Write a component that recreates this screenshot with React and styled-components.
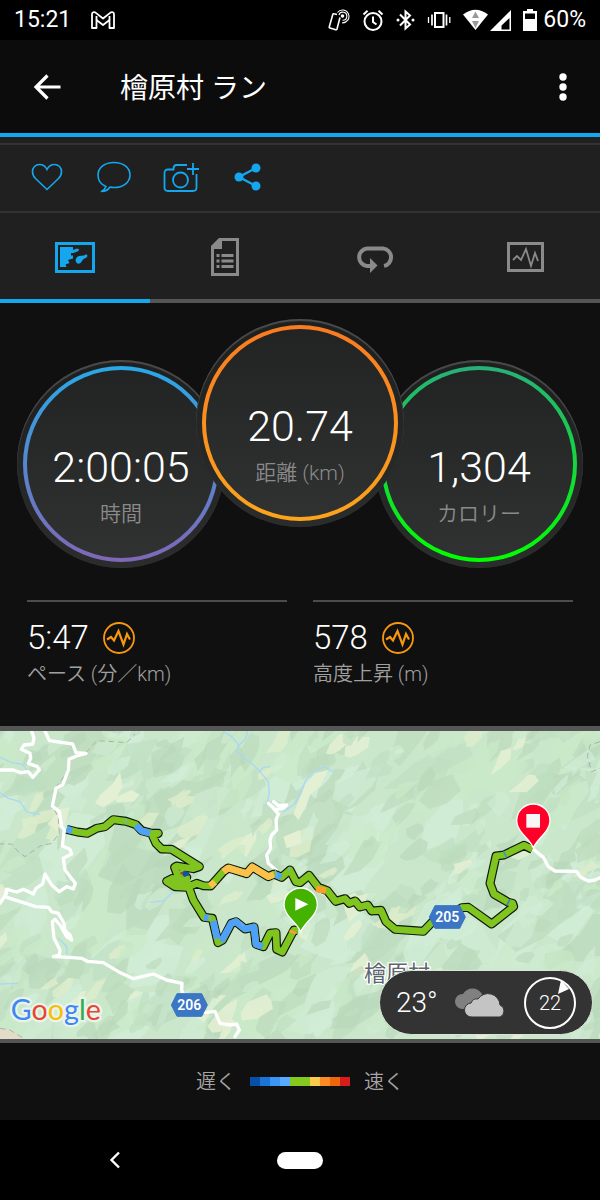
import React from 'react';
import styled, { createGlobalStyle } from 'styled-components';

const GlobalStyle = createGlobalStyle`
  * { box-sizing: border-box; }
  body { margin: 0; background: #101010; }
  svg { display: block; flex: none; }
`;

const fonts = 'Roboto, "Noto Sans CJK JP", sans-serif';

const Screen = styled.div`
  display: flex;
  flex-direction: column;
  min-height: 100vh;
  background: #101010;
  color: #fff;
  font-family: ${fonts};
`;

const StatusBar = styled.div`
  display: flex;
  align-items: center;
  justify-content: space-between;
  height: 40px;
  padding: 0 14px;
  background: #000;
  font-size: 23px;
  line-height: 28px;
  font-weight: 450;
`;

const StatusGroup = styled.div`
  display: flex;
  align-items: center;
  gap: ${(p) => p.$gap}px;
`;

const IconButton = styled.button`
  display: flex;
  align-items: center;
  justify-content: center;
  width: 48px;
  height: 48px;
  padding: 0;
  border: 0;
  background: transparent;
  color: inherit;
`;

const AppBar = styled.header`
  display: flex;
  align-items: center;
  height: 97px;
  padding: 0 13px 0 23px;
  background: #0c0c0c;
  border-bottom: 4px solid #14a7ee;
`;

const Title = styled.h1`
  flex: 1;
  margin: 0 0 0 49px;
  padding-top: 4px;
  font-size: 28px;
  line-height: 40px;
  font-weight: 400;
`;

const Actions = styled.div`
  display: flex;
  align-items: center;
  gap: 19px;
  height: 76px;
  padding: 6px 0 0 23px;
  color: #14a7ee;
  background: linear-gradient(#202020 6px, #333 6px, #333 8px, #202020 8px);
  border-bottom: 2px solid #333;
`;

const Tabs = styled.nav`
  display: grid;
  grid-template-columns: repeat(4, 1fr);
  background: #202020;
`;

const Tab = styled.button`
  display: flex;
  align-items: center;
  justify-content: center;
  height: 90px;
  padding: 2px 0 0;
  border: 0;
  border-bottom: 4px solid ${(p) => (p.$active ? '#14a7ee' : '#555')};
  background: transparent;
  color: ${(p) => (p.$active ? '#14a7ee' : '#8a8a8a')};
`;

const Dials = styled.section`
  display: flex;
  justify-content: center;
  align-items: flex-end;
  padding: 16px 0 32px;
`;

const Dial = styled.div`
  flex: none;
  width: 208px;
  height: 208px;
  padding: 6px;
  border-radius: 50%;
  background: linear-gradient(#1e1f1f, #2b2c2c);
  box-shadow: inset 0 2px 1px #4c4c4c, inset 0 0 2px #343434;
  position: relative;
  z-index: ${(p) => (p.$raised ? 1 : 0)};
  margin: ${(p) => (p.$raised ? '0 -29px 41px' : '0')};
`;

const Ring = styled.div`
  height: 100%;
  padding: 4px;
  border-radius: 50%;
  background: linear-gradient(${(p) => p.$from}, ${(p) => p.$to});
`;

const Face = styled.div`
  display: flex;
  flex-direction: column;
  align-items: center;
  height: 100%;
  padding-top: 71px;
  border-radius: 50%;
  background: linear-gradient(#222323, #303131);
`;

const DialValue = styled.div`
  font-size: 43px;
  line-height: 52px;
  font-weight: 300;
`;

const DialLabel = styled.div`
  margin-top: 7px;
  color: #8a8a8a;
  font-size: 21px;
  line-height: 28px;
  font-weight: 350;
`;

const Stats = styled.section`
  display: grid;
  grid-template-columns: 1fr 1fr;
  gap: 26px;
  padding: 0 27px 37px;
`;

const Stat = styled.div`
  border-top: 2px solid #4c4c4c;
  padding-top: 16px;
`;

const StatValue = styled.div`
  display: flex;
  align-items: center;
  gap: 14px;
  font-size: 33px;
  line-height: 40px;
  font-weight: 300;
`;

const StatLabel = styled.div`
  margin-top: 1px;
  color: #a0a0a0;
  font-size: 20px;
  line-height: 30px;
  font-weight: 350;
`;

const MapPanel = styled.section`
  position: relative;
  border-top: 5px solid #555;
  border-bottom: 4px solid #555;
`;

const MapCanvas = styled.svg`
  width: 100%;
  height: 308px;
  background: #cae7cc;
`;

const MapText = styled.text`
  font-family: ${(p) => p.$family || fonts};
  text-anchor: ${(p) => p.$anchor || 'start'};
  font-size: ${(p) => p.$size}px;
  font-weight: ${(p) => p.$weight || 400};
  paint-order: stroke;
  stroke-linejoin: round;
`;

const Weather = styled.div`
  position: absolute;
  right: 7px;
  bottom: 4px;
  display: flex;
  align-items: center;
  width: 214px;
  height: 65px;
  padding: 0 16px;
  border: 1px solid #d8e4d8;
  border-radius: 33px;
  background: #333;
`;

const Temperature = styled.div`
  width: 58px;
  font-size: 28px;
  line-height: 32px;
  font-weight: 300;
`;

const Wind = styled.div`
  display: grid;
  place-items: center;
  margin-left: 17px;
  font-size: 20px;
  line-height: 24px;
  font-weight: 300;
  > * { grid-area: 1 / 1; }
`;

const Legend = styled.div`
  flex: 1;
  display: flex;
  align-items: center;
  justify-content: center;
  gap: 14px;
  min-height: 77px;
  color: #a5a5a5;
  font-size: 20px;
  line-height: 30px;
  font-weight: 350;
`;

const Scale = styled.div`
  display: flex;
`;

const Swatch = styled.span`
  width: 10px;
  height: 9px;
  background: ${(p) => p.$color};
`;

const NavBar = styled.nav`
  display: grid;
  grid-template-columns: repeat(3, 1fr);
  align-items: center;
  height: 80px;
  padding: 0 23px;
  background: #000;
`;

const NavButton = styled(IconButton)`
  justify-self: center;
`;

const HomePill = styled.span`
  width: 46px;
  height: 17px;
  border-radius: 9px;
  background: #fff;
`;

const pulse = '6,18 10,14 14,18 19,7 24,24 28,11 31,19';

function PulseBadge() {
  return (
    <svg width="32" height="32" viewBox="0 0 32 32" fill="none" stroke="#f7980f">
      <circle cx="16" cy="16" r="15" strokeWidth="1.800" />
      <path d="M4 17.500l4-2.500 3 3.500 4.500-9.500 5 13.500 3.500-10.500 3 5.500" strokeWidth="2.200" />
    </svg>
  );
}

function StatusIcons() {
  return (
    <>
      <svg width="22" height="22" viewBox="0 0 22 22" fill="none" stroke="#fff">
        <path d="M12 8.500l-3 11.500q-.3 1-1.300.7L2 19q-1-.3-.7-1.300L4.800 5.500q.3-1 1.300-.7L9 5.500" strokeWidth="1.600" />
        <circle cx="14.500" cy="7" r="1.800" fill="#fff" stroke="none" />
        <path d="M11 6a4 4 0 1 1 3.500 5.200M9.500 3.500a6.400 6.400 0 1 1 4.500 10.300" strokeWidth="1.100" />
      </svg>
      <svg width="22" height="22" viewBox="0 0 22 22" fill="none" stroke="#fff" strokeWidth="2">
        <circle cx="11" cy="12.500" r="8.500" />
        <path d="M11 7.500V13l3.500 2.500M1.500 5.500l4-3.800M20.500 5.500l-4-3.800" />
      </svg>
      <svg width="19" height="22" viewBox="0 0 19 22" fill="none" stroke="#fff" strokeWidth="2">
        <path d="M4 5.500l10 10-4.500 4v-17l4.500 4-10 10" />
        <circle cx="2" cy="11" r="1.500" fill="#fff" stroke="none" />
        <circle cx="17" cy="11" r="1.500" fill="#fff" stroke="none" />
      </svg>
      <svg width="24" height="18" viewBox="0 0 24 18" fill="none" stroke="#fff" strokeWidth="2">
        <rect x="8" y="2" width="8.500" height="14" />
        <path d="M5 3.500v11M19.500 3.500v11" strokeWidth="1.700" />
        <path d="M1.500 6v6M22.800 6v6" strokeWidth="1.300" />
      </svg>
    </>
  );
}

function SignalIcons() {
  return (
    <>
      <svg width="25" height="22" viewBox="0 0 25 22">
        <path d="M0 5.500Q12.500-4 25 5.500L12.500 21z" fill="#fff" />
        <path d="M9 9l3.500-6.500L16 9zM9 12h7l-3.500 7z" fill="#999" />
      </svg>
      <svg width="21" height="21" viewBox="0 0 21 21">
        <path fill="#fff" fillRule="evenodd" d="M21 0v21H0zM19.500 8L11.500 15.500v4h8z" />
      </svg>
    </>
  );
}

/* Small deterministic generator, so the terrain looks the same on each load. */
function makeRandom(seed) {
  let s = seed;
  return () => {
    s = (s * 16807) % 2147483647;
    return s / 2147483647;
  };
}

const darkTones = ['#b8d7ba', '#bfdec1', '#bcdabc'];
const lightTones = ['#d3eed8', '#cfebd2', '#c9e9c8'];
const yellowTones = ['#e4f0d2', '#dcecca'];

const terrainLayers = [
  { count: 90, length: 120, width: 60, tones: [...darkTones, ...lightTones], opacity: 0.65 },
  { count: 190, length: 62, width: 32, tones: [...darkTones, ...darkTones, ...lightTones], opacity: 0.65 },
  { count: 60, length: 46, width: 20, tones: yellowTones, opacity: 0.85 },
  { count: 200, length: 42, width: 17, tones: [...darkTones, ...lightTones], opacity: 0.65 },
];

function buildTerrain() {
  const rnd = makeRandom(90211);
  const facets = [];
  terrainLayers.forEach((layer) => {
    for (let i = 0; i < layer.count; i += 1) {
      const x = rnd() * 1860 - 30;
      const y = rnd() * 980;
      const size = 0.6 + rnd() * 0.8;
      const a = -0.4 - rnd() * 0.8;
      const corners = 6 + Math.floor(rnd() * 4);
      const points = [];
      for (let k = 0; k < corners; k += 1) {
        const t = (k / corners) * Math.PI * 2;
        const r = (0.45 + rnd() * 0.9) * size;
        const px = Math.cos(t) * layer.length * r;
        const py = Math.sin(t) * layer.width * r;
        points.push(
          `${Math.round(x + px * Math.cos(a) - py * Math.sin(a))},${Math.round(y + px * Math.sin(a) + py * Math.cos(a))}`
        );
      }
      facets.push({
        points: points.join(' '),
        fill: layer.tones[Math.floor(rnd() * layer.tones.length)],
        opacity: layer.opacity,
      });
    }
  });
  return facets;
}

const terrain = buildTerrain();

const roads = [
  '95,33 102,55 98,72 72,75 64,88 90,100 92,115 85,130 112,140 118,150 98,172 85,155 62,158 40,150 0,150',
  '135,33 148,62 218,72 228,98 258,100 235,106 207,118 205,150 188,195 168,205 157,258 178,275 185,320 193,330 187,378 210,388 215,402 190,415 195,450 226,490 220,507 200,500 178,515 155,495 135,462 128,492 108,505 100,522 70,508 50,516 20,508 15,530 30,535 70,548 108,560 145,562 155,575 175,580 192,610 195,632 210,645 215,660 200,650 180,615 165,598 157,605 162,655 180,690 178,705 160,710 210,712 245,715 262,724 310,728 355,755 400,776 460,762 500,780 546,790 545,810 560,855',
  '615,878 645,874 660,910 690,915 710,912 718,930 705,950',
  '0,550 20,520',
  '805,250 818,262 835,282 828,300 830,330 815,345 810,360 812,385 800,405 805,430 830,452',
  '820,245 835,256 860,255 850,265 825,268',
  '1600,388 1630,412 1645,440 1665,453 1730,454 1742,472 1765,483 1785,480 1800,473',
];

const streams = [
  '670,36 690,46 718,75 738,55 742,33', '715,72 710,95 760,135 780,155 805,185 808,220 798,260',
  '780,152 790,142 810,140', '850,275 880,255 900,225 915,185 935,158 972,140 1002,156',
  '0,112 35,128 65,132 95,165', '0,218 25,235 60,245 80,275 120,284',
  '450,547 490,543 520,515', '175,655 200,680 202,705', '0,792 55,790',
];

const trails = [
  '258,98 290,62 340,65 380,68 405,42', '205,115 200,160 165,205 158,255 175,295 178,340 155,370 120,378 75,410 55,395 35,372 0,372',
  '0,925 30,930 70,955', '1800,65 1770,75 1762,110 1775,155 1800,145',
];

const meadows = [
  '300,225 340,190 360,155 368,200 345,240 310,262 285,250',
  '915,195 945,160 985,150 960,200 930,225 918,260 895,300 880,280',
  '850,350 900,330 905,370 860,385',
  '345,232 395,210 420,225 400,245 350,247',
];

const routes = [
  '200,328 232,336 262,340 290,325 315,320 340,299 378,304 408,314 425,332 455,340 475,340 458,348 468,370 485,387 515,388 598,440 580,446 530,438 524,442 540,485 518,475 500,484 525,500 562,502 590,490 610,497 632,498 670,455 685,444 740,461 757,441 805,470 822,462 845,472 870,450 888,485 900,488 927,466 955,502 982,512 1007,544 1035,536 1048,550 1065,543 1080,561 1103,555 1115,573 1143,571 1158,605 1185,628 1270,634 1298,605 1345,590 1385,563 1405,562 1475,612 1541,560 1538,550 1525,547 1482,522 1470,490 1488,408 1512,405 1572,376 1597,388',
  '562,490 580,540 612,592 637,595 654,668 668,660 694,610 708,605 735,627 762,621 768,673 790,680 810,640 828,638 830,688 847,696 882,630 894,632',
  '540,450 560,472 548,490 520,490',
];

const paceSegments = [
  ['#4fa0f8', '200,328 216,332'],
  ['#4fa0f8', '408,316 425,333 450,340'],
  ['#4fa0f8', '612,592 624,594'],
  ['#4fa0f8', '640,603 652,658'],
  ['#4fa0f8', '663,665 694,610 708,605 735,627 762,621 768,673 788,680'],
  ['#fbc14a', '630,498 645,486'],
  ['#fbc14a', '670,455 685,444 740,461 757,441 805,470 822,464'],
  ['#4fa0f8', '828,464 843,472'],
  ['#f7a02c', '948,506 978,512'],
  ['#f7a02c', '876,640 880,632'],
  ['#3f8fe0', '1513,404 1517,402'],
  ['#3f78c0', '1523,546 1527,548'],
];

const line = (points, i) => <polyline key={i} points={points} />;

function RouteShield({ x, y, label }) {
  return (
    <g>
      <path d={`M${x - 54} ${y}l17-34h74l17 34-17 34h-74z`} fill="#3b76c5" stroke="#3b76c5" strokeWidth="3" strokeLinejoin="round" />
      <MapText x={x} y={y + 15} $size={42} $weight={600} $anchor="middle" fill="#fff">{label}</MapText>
    </g>
  );
}

function Pin({ x, y, color, children }) {
  return (
    <g transform={`translate(${x} ${y})`}>
      <path d="M0 0C-10-28-50-48-50-82A50 50 0 0 1 50-82C50-48 10-28 0 0z" fill={color} stroke="#fff" strokeWidth="4" />
      {children}
    </g>
  );
}

function RouteMap() {
  return (
    <MapCanvas viewBox="0 33 1800 924" preserveAspectRatio="xMidYMid slice" role="img" aria-label="檜原村">
      {terrain.map((f, i) => (
        <polygon key={i} points={f.points} fill={f.fill} opacity={f.opacity} />
      ))}
      <g fill="#e4f0d4">
        {meadows.map((points) => (
          <polygon key={points} points={points} />
        ))}
      </g>
      <path d="M0 925l35 5 35 27H0z" fill="#e2dcc8" />
      <g fill="none" stroke="#a9d8f5" strokeWidth="4">{streams.map(line)}</g>
      <g fill="none" stroke="#a9b3a9" strokeWidth="3" strokeDasharray="17 11">{trails.map(line)}</g>
      <g fill="none" stroke="#fff" strokeWidth="10" strokeLinejoin="round" strokeLinecap="round">{roads.map(line)}</g>
      <g fill="none" stroke="#10180c" strokeWidth="27" strokeLinejoin="round">{routes.map(line)}</g>
      <g fill="none" stroke="#7fc41f" strokeWidth="20" strokeLinejoin="round">{routes.map(line)}</g>
      <g fill="none" strokeWidth="20" strokeLinejoin="round">
        {paceSegments.map(([color, points]) => (
          <polyline key={points} points={points} stroke={color} />
        ))}
      </g>
      <path d="M510 482l30-12 30 5 5 24-40 2z" fill="#7fc41f" />
      <path d="M543 458l10-6 13 4 2 10-16 5z" fill="#1350a0" />
      <path d="M541 457h8v6h-8z" fill="#c0392b" />
      <path d="M378 296v14M826 450l6 22M866 442l3 10M515 380l2 12M628 586l4 14M722 606l8 12" stroke="#6ab4e8" strokeWidth="4" />
      <path d="M645 655l16 2-4 14-12-3z" fill="#7fc41f" />
      <RouteShield x={568} y={855} label="206" />
      <RouteShield x={1342} y={591} label="205" />
      <MapText x="1092" y="783" $size={66} fill="#5b666d" stroke="#fff" strokeWidth="8">檜原村</MapText>
      <Pin x={902} y={636} color="#45b200">
        <path d="M-16-102v38l39-19z" fill="#fff" />
      </Pin>
      <Pin x={1600} y={384} color="#ff0029">
        <path d="M-21-102h41v41h-41z" fill="#f7f7f7" />
      </Pin>
      <MapText x="32" y="899" $family="Lato, sans-serif" $size={86} $weight={400} stroke="#e6f5e8" strokeWidth="14">
        <tspan fill="#4285f4">G</tspan>
        <tspan fill="#ea4335">o</tspan>
        <tspan fill="#fbbc05">o</tspan>
        <tspan fill="#4285f4">g</tspan>
        <tspan fill="#34a853">l</tspan>
        <tspan fill="#ea4335">e</tspan>
      </MapText>
    </MapCanvas>
  );
}

const legendColors = [
  '#0750a8', '#1a73d6', '#3a95f5', '#58aaff', '#84ca1e',
  '#84ca1e', '#fdca4e', '#fb8b24', '#ee650c', '#d81c1c',
];

const dials = [
  { value: '2:00:05', label: '時間', from: '#2aa8e6', to: '#8067b7' },
  { value: '20.74', label: '距離 (km)', from: '#f97b20', to: '#fca41c', raised: true },
  { value: '1,304', label: 'カロリー', from: '#28b078', to: '#00ff00' },
];

const stats = [
  { value: '5:47', label: 'ペース (分／km)' },
  { value: '578', label: '高度上昇 (m)' },
];

export default function App() {
  return (
    <Screen>
      <GlobalStyle />
      <StatusBar>
        <StatusGroup $gap={20}>
          <span>15:21</span>
          <svg width="24" height="19" viewBox="0 0 24 19" fill="none" stroke="#fff" strokeWidth="1.800" strokeLinejoin="round">
            <path d="M1 17V3.200C1 1.200 3 .5 4.500 1.600L12 7.500l7.500-5.900C21 .5 23 1.200 23 3.200V17h-4.500V9L12 14 5.500 9v8z" />
            <path d="M5.500 9V5M18.500 9V5" />
          </svg>
        </StatusGroup>
        <StatusGroup $gap={12}>
          <StatusIcons />
          <StatusGroup $gap={2}>
            <SignalIcons />
          </StatusGroup>
          <StatusGroup $gap={6}>
            <svg width="14" height="22" viewBox="0 0 14 22">
              <path fill="#fff" fillRule="evenodd" d="M4 0h6v2h4v20H0V2h4zM2 4.500V10h10V4.500z" />
            </svg>
            <span>60%</span>
          </StatusGroup>
        </StatusGroup>
      </StatusBar>

      <AppBar>
        <IconButton aria-label="戻る">
          <svg width="28" height="26" viewBox="0 0 28 26" fill="none" stroke="#fff" strokeWidth="3.200">
            <path d="M14.500 1.500L3 13l11.500 11.500M3 13h24.500" />
          </svg>
        </IconButton>
        <Title>檜原村 ラン</Title>
        <IconButton aria-label="メニュー">
          <svg width="8" height="28" viewBox="0 0 8 28" fill="#fff">
            <circle cx="4" cy="4" r="3.700" />
            <circle cx="4" cy="14" r="3.700" />
            <circle cx="4" cy="24" r="3.700" />
          </svg>
        </IconButton>
      </AppBar>

      <Actions>
        <IconButton aria-label="いいね">
          <svg width="32" height="28" viewBox="0 0 32 28" fill="none" stroke="currentColor" strokeWidth="1.600">
            <path d="M16 26.500L4.500 15.500C2.500 13.500 1.500 11 1.500 8.500 1.500 4.500 4.500 1.500 8.500 1.500c3.500 0 6 2 7.500 5 1.500-3 4-5 7.500-5 4 0 7 3 7 7 0 2.500-1 5-3 7z" />
          </svg>
        </IconButton>
        <IconButton aria-label="コメント">
          <svg width="34" height="32" viewBox="0 0 34 32" fill="none" stroke="currentColor" strokeWidth="1.600" strokeLinejoin="round">
            <path d="M9 25.500C4 23.500 1 19 1 14 1 6.500 8 1.500 17 1.500S33 6.500 33 14 26 26.500 17 26.500q-2 0-4-.5-3 4.500-8.500 4.500 3.500-2 4.500-5z" />
          </svg>
        </IconButton>
        <IconButton aria-label="写真を追加">
          <svg width="36" height="32" viewBox="0 0 36 32" fill="none" stroke="currentColor" strokeWidth="1.800">
            <path d="M24 4H13.500Q10.500 4 10.500 8.500H5Q1.500 8.500 1.500 12v14.500Q1.500 30 5 30h25q3.500 0 3.500-3.500V13M30 2v12M24 8h12" />
            <circle cx="17.500" cy="19" r="7.500" />
          </svg>
        </IconButton>
        <IconButton aria-label="共有">
          <svg width="28" height="28" viewBox="0 0 28 28" fill="currentColor">
            <path d="M22 5L5 14l17 9" fill="none" stroke="currentColor" strokeWidth="2.400" />
            <circle cx="22" cy="5" r="4.500" />
            <circle cx="5" cy="14" r="4.500" />
            <circle cx="22" cy="23" r="4.500" />
          </svg>
        </IconButton>
      </Actions>

      <Tabs>
        <Tab $active aria-label="マップ">
          <svg width="40" height="31" viewBox="0 0 40 31" fill="currentColor">
            <path fillRule="evenodd" d="M0 0h40v31H0zM3 3v25h34V3z" />
            <path d="M5 5h13v3l4-1.500q3 .5 1.500 2.500l-5 2H16v2.500h2v3l-5 1.500 1.500 3-4 1.500 1 2.500H5z" />
            <path d="M21 20q-1.500-4 3-6l5-.5q3-2 3.500.5-.5 2-4 3l-3 4q-3 2-4.500-1z" />
          </svg>
        </Tab>
        <Tab aria-label="詳細">
          <svg width="28" height="38" viewBox="0 0 28 38" fill="currentColor">
            <path fillRule="evenodd" d="M8 0h20v38H0V8zM11 3v8H3v24h22V3z" />
            <path d="M5.500 16h3v3h-3zM10.500 16h12v3h-12zM5.500 21.500h3v3h-3zM10.500 21.500h12v3h-12zM5.500 27h3v3h-3zM10.500 27h12v3h-12z" />
          </svg>
        </Tab>
        <Tab aria-label="ラップ">
          <svg width="38" height="34" viewBox="0 0 38 34" fill="none" stroke="currentColor" strokeWidth="4">
            <path d="M15 26h-4a8.800 8.800 0 0 1 0-17.500h16a8.800 8.800 0 0 1 1 17.400" />
            <path d="M14 18l7.500 7.500-7.500 7.500z" fill="currentColor" stroke="none" />
          </svg>
        </Tab>
        <Tab aria-label="グラフ">
          <svg width="37" height="30" viewBox="0 0 37 30" fill="none" stroke="currentColor">
            <rect x="1.500" y="1.500" width="34" height="27" strokeWidth="3" />
            <polyline points={pulse} strokeWidth="1.800" />
          </svg>
        </Tab>
      </Tabs>

      <Dials>
        {dials.map((d) => (
          <Dial key={d.value} $raised={d.raised}>
            <Ring $from={d.from} $to={d.to}>
              <Face>
                <DialValue>{d.value}</DialValue>
                <DialLabel>{d.label}</DialLabel>
              </Face>
            </Ring>
          </Dial>
        ))}
      </Dials>

      <Stats>
        {stats.map((s) => (
          <Stat key={s.value}>
            <StatValue>
              {s.value}
              <PulseBadge />
            </StatValue>
            <StatLabel>{s.label}</StatLabel>
          </Stat>
        ))}
      </Stats>

      <MapPanel>
        <RouteMap />
        <Weather>
          <Temperature>23°</Temperature>
          <svg width="53" height="30" viewBox="0 0 53 30">
            <path d="M8 21a7.500 7.500 0 0 1 1-15 11 11 0 0 1 19 0l4 15z" fill="#808080" />
            <path d="M18 29a7 7 0 0 1-1-14q2-5 7-4a12 12 0 0 1 22 6 6.500 6.500 0 0 1 0 12z" fill="#c4c4c4" stroke="#333" />
          </svg>
          <Wind>
            <svg width="52" height="52" viewBox="0 0 52 52">
              <circle cx="26" cy="26" r="25" fill="none" stroke="#fff" strokeWidth="2" />
              <path d="M37 3l8 9-11 5z" fill="#fff" />
            </svg>
            <span>22</span>
          </Wind>
        </Weather>
      </MapPanel>

      <Legend>
        <span>遅く</span>
        <Scale>
          {legendColors.map((c, i) => (
            <Swatch key={i} $color={c} />
          ))}
        </Scale>
        <span>速く</span>
      </Legend>

      <NavBar>
        <NavButton aria-label="戻る">
          <svg width="12" height="18" viewBox="0 0 12 18" fill="none" stroke="#fff" strokeWidth="2.400">
            <path d="M10 1.500L2.500 9l7.500 7.500" />
          </svg>
        </NavButton>
        <NavButton aria-label="ホーム">
          <HomePill />
        </NavButton>
      </NavBar>
    </Screen>
  );
}
